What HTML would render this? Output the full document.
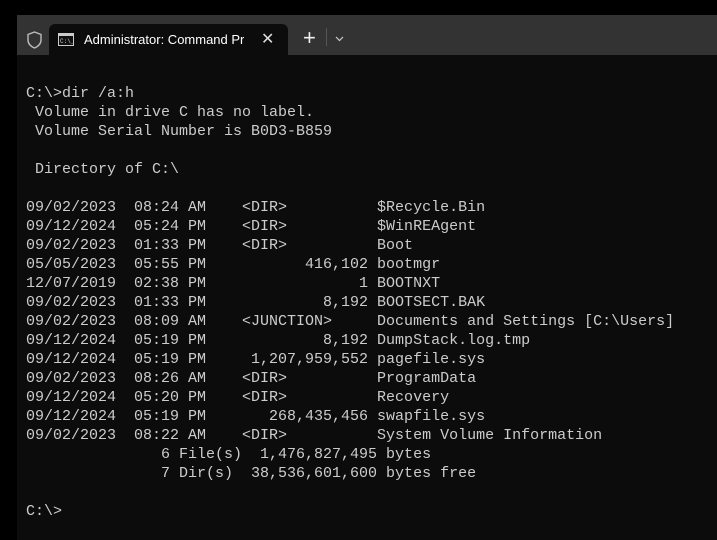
<!DOCTYPE html>
<html><head><style>
body{margin:0;width:717px;height:540px;background:#000;overflow:hidden;position:relative;font-family:"Liberation Sans",sans-serif}
#win{position:absolute;left:17px;top:15px;width:700px;height:525px;background:#0c0c0c}
#bar{position:absolute;left:0;top:0;width:700px;height:40px;background:#333}
#tab{position:absolute;left:32px;top:9px;width:239px;height:31px;background:#0c0c0c;border-radius:6px 6px 0 0}
#tab .t{position:absolute;left:35px;top:8px;color:#fff;font-size:13px;width:160px;overflow:hidden;white-space:nowrap}
#tab .x{position:absolute;left:212px;top:5px;color:#ddd;font-size:16px}
pre{position:absolute;left:26px;top:84px;margin:0;font-family:"Liberation Mono",monospace;font-size:15px;line-height:19px;color:#ccc}
</style></head><body>
<div id="win"><div id="bar">
<svg style="position:absolute;left:9px;top:16px" width="17" height="18" viewBox="0 0 17 18"><path d="M8.5 1 L15 3.5 V9 C15 13 12 15.5 8.5 17 C5 15.5 2 13 2 9 V3.5 Z" fill="none" stroke="#bbb" stroke-width="1.4"/></svg>
<div id="tab">
<svg style="position:absolute;left:9px;top:9px" width="16" height="13" viewBox="0 0 16 13"><rect x="0.5" y="0.5" width="15" height="12" fill="#111" stroke="#ccc"/><rect x="1" y="1" width="14" height="2" fill="#ccc"/><text x="2" y="10" font-size="6" fill="#ccc" font-family="Liberation Mono">C:\_</text></svg>
<div class="t">Administrator: Command Prompt</div><div class="x">✕</div></div>
<div style="position:absolute;left:286px;top:10px;color:#eee;font-size:22px">+</div>
<div style="position:absolute;left:309px;top:13px;width:1px;height:18px;background:#555"></div>
<svg style="position:absolute;left:318px;top:21px" width="9" height="6" viewBox="0 0 9 6"><path d="M1 1 L4.5 4.5 L8 1" fill="none" stroke="#ccc" stroke-width="1.2"/></svg>
</div></div>
<pre>C:\&gt;dir /a:h
 Volume in drive C has no label.
 Volume Serial Number is B0D3-B859

 Directory of C:\

09/02/2023  08:24 AM    &lt;DIR&gt;          $Recycle.Bin
09/12/2024  05:24 PM    &lt;DIR&gt;          $WinREAgent
09/02/2023  01:33 PM    &lt;DIR&gt;          Boot
05/05/2023  05:55 PM           416,102 bootmgr
12/07/2019  02:38 PM                 1 BOOTNXT
09/02/2023  01:33 PM             8,192 BOOTSECT.BAK
09/02/2023  08:09 AM    &lt;JUNCTION&gt;     Documents and Settings [C:\Users]
09/12/2024  05:19 PM             8,192 DumpStack.log.tmp
09/12/2024  05:19 PM     1,207,959,552 pagefile.sys
09/02/2023  08:26 AM    &lt;DIR&gt;          ProgramData
09/12/2024  05:20 PM    &lt;DIR&gt;          Recovery
09/12/2024  05:19 PM       268,435,456 swapfile.sys
09/02/2023  08:22 AM    &lt;DIR&gt;          System Volume Information
               6 File(s)  1,476,827,495 bytes
               7 Dir(s)  38,536,601,600 bytes free

C:\&gt;</pre>
</body></html>
